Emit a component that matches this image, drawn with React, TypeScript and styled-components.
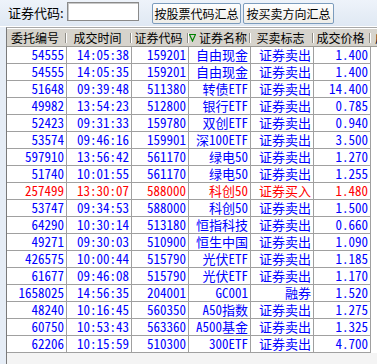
import React from "react";
import styled, { createGlobalStyle } from "styled-components";

const GlobalStyle = createGlobalStyle`
  html, body {
    margin: 0;
    padding: 0;
    background: #e6edf6;
  }
  * {
    box-sizing: border-box;
  }
`;

const FONT = `"Noto Sans CJK SC", "Liberation Sans", sans-serif`;
const COLS = "60px 65px 57px 62px 63px 57px 60px";

const Page = styled.div`
  width: 377px;
  height: 364px;
  overflow: hidden;
  display: flex;
  flex-direction: column;
  font-family: ${FONT};
  background: #e6edf6;
`;

const Toolbar = styled.div`
  height: 27px;
  display: flex;
  align-items: center;
  padding-left: 8px;
  background: linear-gradient(#eef3fa, #dfe8f3);
  border-bottom: 1px solid #ffffff;
`;

const Label = styled.span`
  font-size: 13px;
  line-height: 16px;
  color: #000;
  width: 59px;
`;

const SearchInput = styled.input`
  width: 72px;
  height: 19px;
  margin-bottom: 4px;
  border: 1px solid #8a8a8a;
  box-shadow: inset 1px 1px 0 #c8c8c8;
  background: #fff;
  outline: none;
  padding: 0 2px;
`;

const ToolButton = styled.button<{ $w: number; $gap: number }>`
  width: ${(p) => p.$w}px;
  height: 21px;
  margin-left: ${(p) => p.$gap}px;
  padding: 0;
  border: 1px solid #7c9cbd;
  border-radius: 2px;
  background: linear-gradient(#fefefe, #eeede8);
  font-family: ${FONT};
  font-size: 12px;
  line-height: 19px;
  color: #000;
  white-space: nowrap;
  cursor: pointer;
`;

const Frame = styled.div`
  flex: 1;
  margin-left: 6px;
  border-left: 1px solid #7a7a7a;
  border-top: 1px solid #a8a8a8;
  background: #f4f4f4;
  overflow: hidden;
`;

const HeaderRow = styled.div`
  display: grid;
  grid-template-columns: ${COLS};
  height: 19px;
  background: #d6d3cc;
  border-top: 1px solid #ffffff;
  border-bottom: 1px solid #9c9a94;
  width: 424px;
`;

const HeaderCell = styled.div`
  position: relative;
  display: flex;
  align-items: center;
  justify-content: center;
  gap: 3px;
  padding-right: 4px;
  font-size: 12px;
  line-height: 16px;
  color: #000;
  white-space: nowrap;

  &::after {
    content: "";
    position: absolute;
    right: 1px;
    top: 4px;
    width: 1px;
    height: 10px;
    background: #8e8c86;
    box-shadow: 1px 0 0 #ffffff;
  }
`;

const SortMark = styled.svg`
  flex: none;
`;

const Body = styled.div`
  background: #ffffff;
`;

const DataRow = styled.div<{ $buy?: boolean }>`
  display: grid;
  grid-template-columns: 60px 65px 57px 62px 63px 57px;
  height: 17px;
  color: ${(p) => (p.$buy ? "#ff0000" : "#0000ff")};
`;

const DataCell = styled.div`
  border-right: 1px solid #a0a0a0;
  border-bottom: 1px solid #a0a0a0;
  padding-right: 2px;
  text-align: right;
  font-size: 13px;
  line-height: 16px;
  white-space: nowrap;
  font-feature-settings: "hwid";
`;

const headers = ["委托编号", "成交时间", "证券代码", "证券名称", "买卖标志", "成交价格", "成交数量"];

const rows: { cells: string[]; buy?: boolean }[] = [
  { cells: ["54555", "14:05:38", "159201", "自由现金", "证券卖出", "1.400"] },
  { cells: ["54555", "14:05:35", "159201", "自由现金", "证券卖出", "1.400"] },
  { cells: ["51648", "09:39:48", "511380", "转债ETF", "证券卖出", "14.400"] },
  { cells: ["49982", "13:54:23", "512800", "银行ETF", "证券卖出", "0.785"] },
  { cells: ["52423", "09:31:33", "159780", "双创ETF", "证券卖出", "0.940"] },
  { cells: ["53574", "09:46:16", "159901", "深100ETF", "证券卖出", "3.500"] },
  { cells: ["597910", "13:56:42", "561170", "绿电50", "证券卖出", "1.270"] },
  { cells: ["51740", "10:01:55", "561170", "绿电50", "证券卖出", "1.255"] },
  { cells: ["257499", "13:30:07", "588000", "科创50", "证券买入", "1.480"], buy: true },
  { cells: ["53747", "09:34:53", "588000", "科创50", "证券卖出", "1.500"] },
  { cells: ["64290", "10:30:14", "513180", "恒指科技", "证券卖出", "0.660"] },
  { cells: ["49271", "09:30:03", "510900", "恒生中国", "证券卖出", "1.090"] },
  { cells: ["426575", "10:00:44", "515790", "光伏ETF", "证券卖出", "1.185"] },
  { cells: ["61677", "09:46:08", "515790", "光伏ETF", "证券卖出", "1.170"] },
  { cells: ["1658025", "14:56:35", "204001", "GC001", "融券", "1.520"] },
  { cells: ["48240", "10:16:45", "560350", "A50指数", "证券卖出", "1.275"] },
  { cells: ["60750", "10:53:43", "563360", "A500基金", "证券卖出", "1.325"] },
  { cells: ["62206", "10:15:59", "510300", "300ETF", "证券卖出", "4.700"] },
];

export default function App() {
  return (
    <Page>
      <GlobalStyle />
      <Toolbar>
        <Label>证券代码:</Label>
        <SearchInput />
        <ToolButton $w={89} $gap={13}>按股票代码汇总</ToolButton>
        <ToolButton $w={91} $gap={2}>按买卖方向汇总</ToolButton>
      </Toolbar>
      <Frame>
        <HeaderRow>
          {headers.map((h, i) => (
            <HeaderCell key={h}>
              {i === 3 && (
                <SortMark width="7" height="9" viewBox="0 0 7 9">
                  <path d="M0.5 1.5 H6.5 L3.5 8 Z" fill="none" stroke="#008000" strokeWidth="1.2" />
                </SortMark>
              )}
              {h}
            </HeaderCell>
          ))}
        </HeaderRow>
        <Body>
          {rows.map((r, i) => (
            <DataRow key={i} $buy={r.buy}>
              {r.cells.map((c, j) => (
                <DataCell key={j}>{c}</DataCell>
              ))}
            </DataRow>
          ))}
        </Body>
      </Frame>
    </Page>
  );
}
